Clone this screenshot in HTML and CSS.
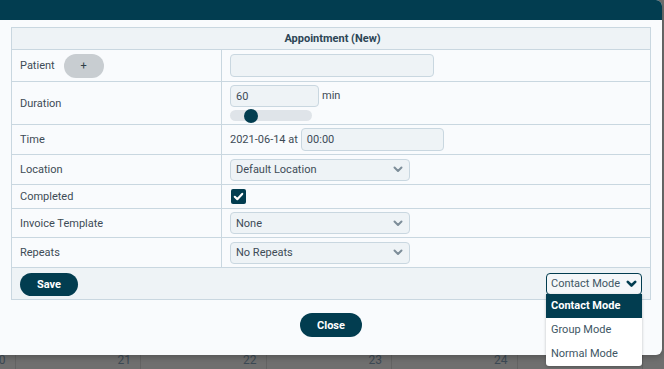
FILE: index.html
```html
<!DOCTYPE html>
<html>
<head>
<meta charset="utf-8">
<link rel="stylesheet" href="styles.css">
</head>
<body>
<div class="calendar">
  <div class="day">20</div>
  <div class="day">21</div>
  <div class="day">22</div>
  <div class="day">23</div>
  <div class="day">24</div>
  <div class="day">25</div>
</div>

<div class="modal">
  <div class="modal-header"></div>
  <div class="modal-body">
    <div class="form">
      <div class="row row-head"><div class="head-title">Appointment (New)</div></div>

      <div class="row row-patient">
        <div class="label">Patient <span class="pill-btn">+</span></div>
        <div class="field"><div class="input input-patient"></div></div>
      </div>

      <div class="row row-duration">
        <div class="label">Duration</div>
        <div class="field field-col">
          <div class="inline"><div class="input input-duration">60</div><span class="unit">min</span></div>
          <div class="slider"><span class="thumb"></span></div>
        </div>
      </div>

      <div class="row row-time">
        <div class="label">Time</div>
        <div class="field"><span class="date">2021-06-14 at</span><div class="input input-time">00:00</div></div>
      </div>

      <div class="row row-location">
        <div class="label">Location</div>
        <div class="field">
          <div class="input select">Default Location
            <svg class="chev" width="10" height="7" viewBox="0 0 10 7"><polyline points="1.5,1.5 5,5 8.5,1.5" fill="none" stroke="#7d8d99" stroke-width="2" stroke-linecap="round" stroke-linejoin="round"/></svg>
          </div>
        </div>
      </div>

      <div class="row row-completed">
        <div class="label">Completed</div>
        <div class="field">
          <span class="checkbox"><svg width="15" height="15" viewBox="0 0 15 15"><polyline points="3.8,7.8 6.3,10.2 11.2,4.9" fill="none" stroke="#fff" stroke-width="2.2" stroke-linecap="round" stroke-linejoin="round"/></svg></span>
        </div>
      </div>

      <div class="row row-invoice">
        <div class="label">Invoice Template</div>
        <div class="field">
          <div class="input select">None
            <svg class="chev" width="10" height="7" viewBox="0 0 10 7"><polyline points="1.5,1.5 5,5 8.5,1.5" fill="none" stroke="#7d8d99" stroke-width="2" stroke-linecap="round" stroke-linejoin="round"/></svg>
          </div>
        </div>
      </div>

      <div class="row row-repeats">
        <div class="label">Repeats</div>
        <div class="field">
          <div class="input select">No Repeats
            <svg class="chev" width="10" height="7" viewBox="0 0 10 7"><polyline points="1.5,1.5 5,5 8.5,1.5" fill="none" stroke="#7d8d99" stroke-width="2" stroke-linecap="round" stroke-linejoin="round"/></svg>
          </div>
        </div>
      </div>

      <div class="row row-footer">
        <button class="btn">Save</button>
        <div class="mode-wrap">
          <div class="mode-select">Contact Mode
            <svg class="chev-dark" width="11" height="8" viewBox="0 0 11 8"><polyline points="1.8,1.8 5.5,5.5 9.2,1.8" fill="none" stroke="#023d50" stroke-width="2.6" stroke-linecap="round" stroke-linejoin="round"/></svg>
          </div>
          <div class="menu">
            <div class="opt opt-active">Contact Mode</div>
            <div class="opt">Group Mode</div>
            <div class="opt">Normal Mode</div>
          </div>
        </div>
      </div>
    </div>
    <div class="actions"><button class="btn btn-close">Close</button></div>
  </div>
</div>
</body>
</html>
```
FILE: styles.css
```css
* { box-sizing: border-box; }
html, body { margin: 0; padding: 0; }
body {
  width: 664px;
  height: 369px;
  overflow: hidden;
  background: #6f6f6f;
  font-family: Roboto, "Noto Sans", sans-serif;
  position: relative;
}

.calendar {
  display: flex;
  margin-left: -110px;
  padding-top: 353px;
}
.day {
  flex: 0 0 125.5px;
  height: 16px;
  border-right: 1px solid #636363;
  text-align: right;
  padding-right: 9px;
  font-size: 12px;
  line-height: 15px;
  color: #3c4954;
}

.modal {
  position: absolute;
  left: 0;
  top: 0;
  width: 662px;
  height: 355px;
  background: #f9fbfd;
  border-radius: 0 6px 6px 0;
  box-shadow: 0 2px 6px rgba(0,0,0,0.25);
}
.modal-header {
  height: 20px;
  background: #023d50;
  border-radius: 0 6px 0 0;
}
.modal-body {
  padding: 7px 11px 0 11px;
}

.form {
  border: 1px solid #c9d7e0;
  width: 640px;
}
.row {
  display: flex;
  border-bottom: 1px solid #c9d7e0;
  font-size: 11px;
  color: #3d4b56;
}
.label {
  width: 210px;
  border-right: 1px solid #c9d7e0;
  padding-left: 8px;
  display: flex;
  align-items: center;
}
.field {
  flex: 1;
  padding-left: 8px;
  display: flex;
  align-items: center;
}

.row-head {
  height: 22px;
  background: #eef3f6;
  justify-content: center;
  align-items: center;
}
.head-title {
  font-weight: 700;
  color: #2c4555;
  font-size: 11px;
  padding-left: 3px;
}
.row-patient { height: 32px; }
.row-duration { height: 43px; }
.row-time { height: 30px; }
.row-location { height: 30px; }
.row-completed { height: 24px; }
.row-invoice { height: 29px; }
.row-repeats { height: 30px; }
.row-footer {
  height: 31px;
  border-bottom: none;
  background: #eef3f6;
  align-items: center;
  justify-content: space-between;
  padding: 0 8px;
}

.pill-btn {
  display: inline-flex;
  align-items: center;
  justify-content: center;
  width: 40px;
  height: 24px;
  margin-left: 9px;
  border-radius: 12px;
  background: #c8cdd1;
  color: #2e3e48;
  font-size: 11px;
  padding-bottom: 1px;
}

.input {
  height: 23px;
  background: #eef3f6;
  border: 1px solid #c9d7e0;
  border-radius: 4px;
  padding: 0 5px;
  display: flex;
  align-items: center;
  font-size: 11px;
  color: #3d4b56;
}
.input-patient { width: 204px; }
.field-col {
  flex-direction: column;
  align-items: flex-start;
  justify-content: flex-start;
  padding-top: 3px;
}
.inline { display: flex; align-items: center; }
.input-duration { width: 89px; height: 22px; }
.unit { margin-left: 3px; padding-bottom: 2px; }
.slider {
  position: relative;
  width: 82px;
  height: 11px;
  margin-top: 3px;
  background: #dfe4e9;
  border-radius: 6px;
}
.thumb {
  position: absolute;
  left: 14px;
  top: -1.5px;
  width: 14px;
  height: 14px;
  border-radius: 50%;
  background: #023d50;
}
.date { margin-right: 3px; }
.input-time { width: 143px; }
.select {
  width: 180px;
  height: 22px;
  justify-content: space-between;
  padding-right: 6px;
}
.chev { display: block; }

.checkbox {
  width: 15px;
  height: 15px;
  border-radius: 2px;
  background: #023d50;
  display: inline-block;
  margin-left: 1px;
}
.checkbox svg { display: block; }

.btn {
  border: none;
  background: #023d50;
  color: #fff;
  font-family: Roboto, sans-serif;
  font-weight: 700;
  font-size: 11px;
  height: 23px;
  width: 58px;
  border-radius: 12px;
  padding: 0;
  margin-top: 1px;
}

.mode-wrap { position: relative; }
.mode-select {
  width: 96px;
  height: 22px;
  border: 1px solid #023d50;
  border-radius: 4px;
  background: #f4f7f9;
  display: flex;
  align-items: center;
  justify-content: space-between;
  padding: 0 4px 0 4px;
  color: #3e5664;
  font-size: 11px;
}
.chev-dark { display: block; }
.menu {
  position: absolute;
  left: 0;
  top: 21px;
  width: 96px;
  background: #fff;
  border-radius: 0 0 3px 3px;
  box-shadow: 0 1px 3px rgba(0,0,0,0.25);
  z-index: 5;
  overflow: hidden;
}
.opt {
  height: 24px;
  line-height: 24px;
  padding-left: 5px;
  font-size: 11px;
  color: #3e5664;
}
.opt-active {
  background: #023d50;
  color: #fff;
  font-weight: 700;
}

.actions {
  display: flex;
  justify-content: center;
  margin-top: 13px;
}
.btn-close {
  width: 62px;
  height: 24px;
  margin-top: 0;
}
```
